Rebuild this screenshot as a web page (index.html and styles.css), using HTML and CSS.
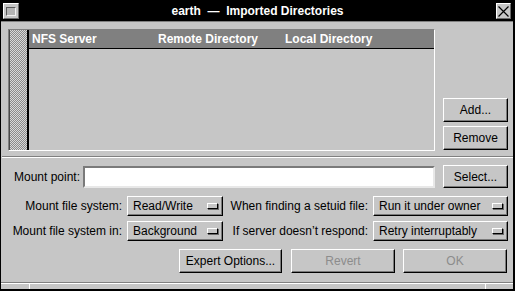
FILE: index.html
```html
<!DOCTYPE html>
<html lang="en">
<head>
    <meta charset="UTF-8">
    <title>earth — Imported Directories</title>
    <link rel="stylesheet" href="styles.css">
</head>
<body>
    <div class="window">
        <!-- Title bar -->
        <div class="titlebar">
            <span class="menu-box"><span class="menu-inner"></span></span>
            <span class="title">earth &nbsp;—&nbsp; Imported Directories</span>
            <span class="close-box">
                <svg width="13" height="13" viewBox="0 0 13 13">
                    <path d="M1.5 1.5 L11.5 11.5 M11.5 1.5 L1.5 11.5" stroke="#000" stroke-width="1.2" fill="none"/>
                </svg>
            </span>
        </div>

        <div class="content">
            <!-- Directory list and its buttons -->
            <div class="list-row">
                <div class="list">
                    <div class="gutter"></div>
                    <div class="list-main">
                        <div class="list-head">
                            <span class="col col-server">NFS Server</span>
                            <span class="col col-remote">Remote Directory</span>
                            <span class="col">Local Directory</span>
                        </div>
                    </div>
                </div>
                <div class="side-buttons">
                    <button class="btn side-btn add-btn">Add...</button>
                    <button class="btn side-btn">Remove</button>
                </div>
            </div>

            <div class="separator"></div>

            <!-- Mount point -->
            <div class="mount-row">
                <label class="mount-label" for="mountPoint">Mount point:</label>
                <input type="text" id="mountPoint" class="text-input">
                <button class="btn select-btn">Select...</button>
            </div>

            <!-- Options -->
            <div class="options">
                <span class="opt-label">Mount file system:</span>
                <div class="option-menu">Read/Write<span class="indicator"></span></div>
                <span class="opt-label">When finding a setuid file:</span>
                <div class="option-menu">Run it under owner<span class="indicator"></span></div>

                <span class="opt-label">Mount file system in:</span>
                <div class="option-menu">Background<span class="indicator"></span></div>
                <span class="opt-label">If server doesn’t respond:</span>
                <div class="option-menu">Retry interruptably<span class="indicator"></span></div>
            </div>

            <!-- Dialog actions -->
            <div class="actions">
                <button class="btn action-btn expert-btn">Expert Options...</button>
                <button class="btn action-btn revert-btn" disabled>Revert</button>
                <button class="btn action-btn ok-btn" disabled>OK</button>
            </div>
        </div>

        <!-- Status strip -->
        <div class="status">
            <span class="status-cell first"></span>
            <span class="status-cell mid"></span>
            <span class="status-cell last"></span>
        </div>
    </div>
</body>
</html>
```

FILE: styles.css
```css
/* Global styles */
body {
    margin: 0;
    font-family: "Liberation Sans", Arial, sans-serif;
    font-size: 12px;
    color: #000;
    background-color: #c6c6c6;
}

/* Window frame */
.window {
    box-sizing: border-box;
    width: 515px;
    height: 291px;
    border: 1px solid #000;
    border-right-width: 2px;
    background-color: #c6c6c6;
    display: flex;
    flex-direction: column;
}

/* Title bar */
.titlebar {
    height: 20px;
    background-color: #000;
    border-bottom: 1px solid #808080;
    display: flex;
    align-items: center;
    padding: 0 2px;
}

.menu-box {
    box-sizing: border-box;
    width: 16px;
    height: 16px;
    background-color: #c6c6c6;
    border: 1px solid;
    border-color: #fff #6a6a6a #6a6a6a #fff;
    display: flex;
    align-items: center;
    justify-content: center;
}

.menu-inner {
    box-sizing: border-box;
    width: 10px;
    height: 9px;
    background-color: #b4b4b4;
    border: 1px solid;
    border-color: #5a5a5a #f0f0f0 #f0f0f0 #5a5a5a;
}

.title {
    flex: 1;
    text-align: center;
    color: #fff;
    font-weight: bold;
    font-size: 12px;
}

.close-box {
    box-sizing: border-box;
    width: 15px;
    height: 16px;
    background-color: #c6c6c6;
    border: 1px solid;
    border-color: #fff #6a6a6a #6a6a6a #fff;
    display: flex;
    align-items: center;
    justify-content: center;
}

/* Main content */
.content {
    flex: 1;
    padding: 7px 5px 0 7px;
}

.list-row {
    display: flex;
    height: 122px;
}

.list {
    box-sizing: border-box;
    width: 427px;
    height: 122px;
    border: 1px solid;
    border-color: #808080 #fff #fff #808080;
    display: flex;
}

.gutter {
    width: 17px;
    border-left: 1px solid #4a4a4a;
    border-right: 2px solid #000;
    background-color: #c6c6c6;
    background-image: repeating-conic-gradient(#8a8a8a 0 25%, #d8d8d8 0 50%);
    background-size: 2px 2px;
}

.list-main {
    flex: 1;
}

.list-head {
    height: 18px;
    background-color: #808080;
    border-bottom: 1px solid #000;
    color: #fff;
    font-weight: bold;
    display: flex;
    align-items: center;
    padding-left: 3px;
}

.col-server {
    width: 126px;
}

.col-remote {
    width: 127px;
}

.side-buttons {
    margin-left: 8px;
    display: flex;
    flex-direction: column;
    justify-content: flex-end;
    gap: 4px;
    padding-bottom: 1px;
}

/* Button styles */
.btn {
    box-sizing: border-box;
    font-family: "Liberation Sans", Arial, sans-serif;
    font-size: 12px;
    color: #000;
    background-color: #c6c6c6;
    border: 1px solid;
    border-color: #fff #000 #000 #fff;
    box-shadow: inset -1px -1px #7a7a7a;
    padding: 0;
    text-align: center;
}

.btn:disabled {
    color: #8c8c8c;
}

.side-btn {
    width: 65px;
    height: 24px;
}

.separator {
    margin-top: 5px;
    margin-left: -6px;
    margin-right: -5px;
    height: 0;
    border-top: 1px solid #808080;
    border-bottom: 1px solid #fff;
}

/* Mount point row */
.mount-row {
    margin-top: 7px;
    display: flex;
    align-items: center;
    height: 23px;
}

.mount-label {
    margin-left: 6px;
    margin-right: 3px;
}

.text-input {
    box-sizing: border-box;
    flex: 1;
    height: 22px;
    margin: 0 8px 0 0;
    background-color: #fff;
    border: 2px solid;
    border-color: #7a7a7a #e8e8e8 #e8e8e8 #7a7a7a;
    outline: none;
}

.select-btn {
    width: 65px;
    height: 23px;
}

/* Option menus */
.options {
    margin-top: 8px;
    display: grid;
    grid-template-columns: 114px 96px 140px 135px;
    grid-auto-rows: 20px;
    column-gap: 5px;
    row-gap: 5px;
    align-items: center;
}

.opt-label {
    text-align: right;
    white-space: nowrap;
}

.option-menu {
    box-sizing: border-box;
    height: 20px;
    border: 1px solid;
    border-color: #fff #000 #000 #fff;
    box-shadow: inset -1px -1px #7a7a7a;
    display: flex;
    align-items: center;
    justify-content: space-between;
    padding: 0 4px 0 5px;
    white-space: nowrap;
}

.indicator {
    box-sizing: border-box;
    width: 11px;
    height: 6px;
    background-color: #c6c6c6;
    border: 1px solid;
    border-color: #fff #000 #000 #fff;
    box-shadow: 1px 1px #6a6a6a;
}

/* Dialog actions */
.actions {
    margin-top: 8px;
    display: flex;
    justify-content: flex-end;
    padding-right: 1px;
}

.action-btn {
    height: 24px;
}

.expert-btn {
    width: 103px;
    margin-right: 9px;
}

.revert-btn {
    width: 104px;
    margin-right: 8px;
}

.ok-btn {
    width: 104px;
}

/* Status strip */
.status {
    height: 6px;
    border-top: 1px solid #808080;
    border-bottom: 1px solid #000;
    box-shadow: inset 0 1px #fff;
    display: flex;
}

.status-cell.first {
    width: 28px;
}

.status-cell.mid {
    flex: 1;
    border-left: 1px solid #fff;
}

.status-cell.last {
    width: 27px;
    border-left: 1px solid #fff;
}
```
